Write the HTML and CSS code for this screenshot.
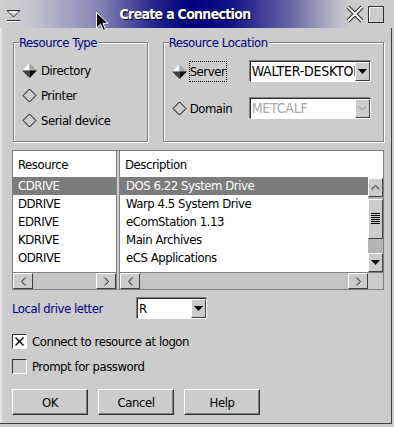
FILE: index.html
```html
<!DOCTYPE html>
<html lang="en">
<head>
    <meta charset="UTF-8">
    <title>Create a Connection</title>
    <link rel="stylesheet" href="styles.css">
</head>
<body>
    <div class="window">
        <div class="titlebar">
            <span class="sysmenu">
                <svg width="16" height="16" viewBox="0 0 16 16">
                    <path d="M1 3.5H14L7.5 10Z" fill="#cfcfcf" stroke="#303030"/>
                    <path d="M3 5H12" stroke="#fff"/>
                    <path d="M1 13.5H14.5" stroke="#303030"/>
                    <path d="M1 14.5H14.5" stroke="#fff"/>
                </svg>
            </span>
            <div class="title">Create a Connection</div>
            <span class="winbtns">
                <svg width="18" height="18" viewBox="0 0 18 18">
                    <path d="M2 2L16 16M16 2L2 16" stroke="#202020" stroke-width="4"/>
                    <path d="M2 2L16 16M16 2L2 16" stroke="#fff" stroke-width="2"/>
                </svg>
                <span class="maxbox"></span>
            </span>
        </div>

        <div class="content">
            <div class="groups">
                <fieldset class="group type-group">
                    <legend>Resource Type</legend>
                    <div class="radio">
                        <svg class="diamond" width="15" height="15" viewBox="0 0 15 15">
                            <path d="M7.5 0L0 7.5H7.5Z" fill="#f4f4f4"/>
                            <path d="M7.5 0L15 7.5H7.5Z" fill="#a8a8a8"/>
                            <path d="M0 7.5L7.5 15V7.5Z" fill="#404040"/>
                            <path d="M15 7.5L7.5 15V7.5Z" fill="#000"/>
                        </svg>
                        <span>Directory</span>
                    </div>
                    <div class="radio">
                        <svg class="diamond" width="15" height="15" viewBox="0 0 15 15">
                            <path d="M7.5 1L14 7.5L7.5 14L1 7.5Z" fill="none" stroke="#000"/>
                        </svg>
                        <span>Printer</span>
                    </div>
                    <div class="radio">
                        <svg class="diamond" width="15" height="15" viewBox="0 0 15 15">
                            <path d="M7.5 1L14 7.5L7.5 14L1 7.5Z" fill="none" stroke="#000"/>
                        </svg>
                        <span>Serial device</span>
                    </div>
                </fieldset>

                <fieldset class="group location-group">
                    <legend>Resource Location</legend>
                    <div class="loc-row">
                        <div class="radio">
                            <svg class="diamond" width="15" height="15" viewBox="0 0 15 15">
                                <path d="M7.5 0L0 7.5H7.5Z" fill="#f4f4f4"/>
                                <path d="M7.5 0L15 7.5H7.5Z" fill="#a8a8a8"/>
                                <path d="M0 7.5L7.5 15V7.5Z" fill="#404040"/>
                                <path d="M15 7.5L7.5 15V7.5Z" fill="#000"/>
                            </svg>
                            <span class="focus">Server</span>
                        </div>
                        <div class="combo loc-combo">
                            <span class="combo-text">WALTER-DESKTOP</span>
                            <span class="drop">
                                <svg width="9" height="5" viewBox="0 0 9 5"><path d="M0 0H9L4.5 5Z" fill="#000"/></svg>
                            </span>
                        </div>
                    </div>
                    <div class="loc-row">
                        <div class="radio">
                            <svg class="diamond" width="15" height="15" viewBox="0 0 15 15">
                                <path d="M7.5 1L14 7.5L7.5 14L1 7.5Z" fill="none" stroke="#000"/>
                            </svg>
                            <span>Domain</span>
                        </div>
                        <div class="combo loc-combo disabled">
                            <span class="combo-text">METCALF</span>
                            <span class="drop">
                                <svg width="9" height="5" viewBox="0 0 9 5"><path d="M1 0.5L4.5 4L8 0.5" fill="none" stroke="#888"/></svg>
                            </span>
                        </div>
                    </div>
                </fieldset>
            </div>

            <div class="lists">
                <div class="pane left-pane">
                    <div class="col-head">Resource</div>
                    <div class="pane-body">
                        <div class="rows">
                            <div class="row selected">CDRIVE</div>
                            <div class="row">DDRIVE</div>
                            <div class="row">EDRIVE</div>
                            <div class="row">KDRIVE</div>
                            <div class="row">ODRIVE</div>
                        </div>
                    </div>
                    <div class="hscroll">
                        <span class="sbtn"><svg width="7" height="9" viewBox="0 0 7 9"><path d="M5 0.5L1.5 4.5L5 8.5" fill="none" stroke="#303030"/><path d="M6.5 0.5L3 4.5L6.5 8.5" fill="none" stroke="#999"/></svg></span>
                        <span class="trough"></span>
                        <span class="sbtn"><svg width="7" height="9" viewBox="0 0 7 9"><path d="M2 0.5L5.5 4.5L2 8.5" fill="none" stroke="#303030"/><path d="M0.5 0.5L4 4.5L0.5 8.5" fill="none" stroke="#999"/></svg></span>
                    </div>
                </div>
                <div class="splitter"></div>
                <div class="pane right-pane">
                    <div class="col-head">Description</div>
                    <div class="pane-body">
                        <div class="rows">
                            <div class="row selected">DOS 6.22 System Drive</div>
                            <div class="row">Warp 4.5 System Drive</div>
                            <div class="row">eComStation 1.13</div>
                            <div class="row">Main Archives</div>
                            <div class="row">eCS Applications</div>
                        </div>
                        <div class="vscroll">
                            <span class="sbtn vbtn"><svg width="9" height="7" viewBox="0 0 9 7"><path d="M0.5 5L4.5 1.5L8.5 5" fill="none" stroke="#303030"/><path d="M0.5 6.5L4.5 3L8.5 6.5" fill="none" stroke="#999"/></svg></span>
                            <span class="thumb">
                                <svg width="9" height="12" viewBox="0 0 9 12">
                                    <path d="M0 0.5H9M0 2.5H9M0 4.5H9M0 6.5H9M0 8.5H9M0 10.5H9" stroke="#000"/>
                                </svg>
                            </span>
                            <span class="vtrough"></span>
                            <span class="sbtn vbtn"><svg width="9" height="5" viewBox="0 0 9 5"><path d="M0 0H9L4.5 5Z" fill="#000"/></svg></span>
                        </div>
                    </div>
                    <div class="hscroll">
                        <span class="sbtn"><svg width="7" height="9" viewBox="0 0 7 9"><path d="M5 0.5L1.5 4.5L5 8.5" fill="none" stroke="#303030"/><path d="M6.5 0.5L3 4.5L6.5 8.5" fill="none" stroke="#999"/></svg></span>
                        <span class="trough"></span>
                        <span class="sbtn"><svg width="7" height="9" viewBox="0 0 7 9"><path d="M2 0.5L5.5 4.5L2 8.5" fill="none" stroke="#303030"/><path d="M0.5 0.5L4 4.5L0.5 8.5" fill="none" stroke="#999"/></svg></span>
                        <span class="corner"></span>
                    </div>
                </div>
            </div>

            <div class="drive-row">
                <span class="blue-label">Local drive letter</span>
                <div class="combo drive-combo">
                    <span class="combo-text">R</span>
                    <span class="drop">
                        <svg width="9" height="5" viewBox="0 0 9 5"><path d="M0 0H9L4.5 5Z" fill="#000"/></svg>
                    </span>
                </div>
            </div>

            <div class="check">
                <span class="box checked">
                    <svg width="11" height="11" viewBox="0 0 11 11"><path d="M1.5 1.5L9.5 9.5M9.5 1.5L1.5 9.5" stroke="#000" stroke-width="1.4"/></svg>
                </span>
                <span>Connect to resource at logon</span>
            </div>
            <div class="check">
                <span class="box"></span>
                <span>Prompt for password</span>
            </div>

            <div class="buttons">
                <button>OK</button>
                <button>Cancel</button>
                <button>Help</button>
            </div>
        </div>

        <svg class="cursor" width="13" height="20" viewBox="0 0 13 20">
            <path d="M0.5 0.5V16L4.5 12.2L7.3 18.5L9.6 17.5L6.9 11.3H12Z" fill="#000" stroke="#fff"/>
        </svg>
    </div>
</body>
</html>
```

FILE: styles.css
```css
body {
    margin: 0;
    background: #cccccc;
    font-family: "DejaVu Sans Condensed", "DejaVu Sans", sans-serif;
    font-stretch: condensed;
    font-size: 13px;
    letter-spacing: -0.45px;
    color: #000;
}
.window {
    position: relative;
    width: 394px;
    height: 427px;
    box-sizing: border-box;
    background: #cccccc;
    display: flex;
    flex-direction: column;
    box-shadow: inset -2px -3px 0 #cccccc, inset -3px -4px 0 #404040, inset 2px 0 0 #e4e4e4;
    overflow: hidden;
}
.titlebar {
    height: 28px;
    display: flex;
    align-items: center;
    background: linear-gradient(90deg, #d0d0d0 0px, #c6c6d0 30px, #8484b4 100px, #24248c 155px, #00007c 190px, #101088 230px, #6666a4 290px, #b8b8c8 335px, #cccccc 350px);
}
.sysmenu {
    width: 28px;
    display: flex;
    justify-content: center;
    padding-top: 2px;
}
.title {
    flex: 1;
    text-align: center;
    color: #fff;
    font-weight: bold;
    font-size: 14px;
    letter-spacing: -0.7px;
    text-shadow: 1px 1px 0 #000;
    padding-right: 4px;
}
.winbtns {
    width: 48px;
    display: flex;
    align-items: center;
    gap: 4px;
}
.maxbox {
    width: 14px;
    height: 15px;
    border: 1px solid #303030;
    background: #cccccc;
    box-shadow: inset 1px 1px 0 #fff;
}

.content {
    flex: 1;
    display: flex;
    flex-direction: column;
    padding: 0 10px 0 12px;
}
.groups {
    display: flex;
    gap: 15px;
    margin-top: 7px;
    margin-left: 1px;
}
.group {
    margin: 0;
    height: 107px;
    box-sizing: border-box;
    border: 1px solid #808080;
    box-shadow: inset 1px 1px 0 #fff, 1px 1px 0 #fff;
    padding: 8px 0 0 8px;
    min-inline-size: 0;
}
.group legend {
    color: #000080;
    background: #cccccc;
    padding: 0 1px 0 0;
    margin-left: -3px;
    line-height: 15px;
}
.type-group {
    width: 135px;
}
.location-group {
    width: 222px;
    padding-top: 11px;
    display: flex;
    flex-direction: column;
    gap: 16px;
}
.radio {
    height: 25px;
    display: flex;
    align-items: center;
    gap: 4px;
}
.loc-row {
    height: 21px;
    display: flex;
    align-items: center;
}
.loc-row .radio {
    width: 78px;
    gap: 3px;
}
.focus {
    outline: 1px dotted #000;
    padding: 2px 1px 2px 0;
}
.combo {
    height: 21px;
    box-sizing: border-box;
    display: flex;
    background: #fff;
    border: 1px solid;
    border-color: #303030 #fff #fff #303030;
    box-shadow: -1px -1px 0 #808080;
}
.loc-combo {
    width: 121px;
}
.loc-combo .combo-text {
    font-size: 14px;
    letter-spacing: -0.2px;
}
.combo-text {
    flex: 1;
    overflow: hidden;
    white-space: nowrap;
    padding-left: 1px;
    line-height: 19px;
}
.disabled .combo-text {
    color: #a8a8a8;
}
.drop {
    width: 15px;
    box-sizing: border-box;
    background: #cccccc;
    border: 1px solid;
    border-color: #fff #404040 #404040 #fff;
    display: flex;
    align-items: center;
    justify-content: center;
}

.lists {
    margin-top: 8px;
    height: 140px;
    box-sizing: border-box;
    border: 1px solid #808080;
    display: flex;
}
.pane {
    display: flex;
    flex-direction: column;
    background: #fff;
}
.left-pane {
    width: 103px;
}
.right-pane {
    flex: 1;
}
.splitter {
    width: 2px;
    background: #cccccc;
    border-left: 1px solid #808080;
    border-right: 1px solid #808080;
}
.col-head {
    height: 26px;
    line-height: 27px;
    padding-left: 5px;
}
.pane-body {
    flex: 1;
    display: flex;
    overflow: hidden;
}
.rows {
    flex: 1;
}
.row {
    height: 18px;
    line-height: 18px;
    padding-left: 5px;
    white-space: nowrap;
}
.right-pane .row {
    padding-left: 6px;
}
.row.selected {
    background: #7c7c7c;
    color: #fff;
}
.hscroll {
    height: 16px;
    display: flex;
    background: #cccccc;
    border-top: 1px solid #808080;
}
.sbtn {
    width: 20px;
    box-sizing: border-box;
    background: #cccccc;
    border: 1px solid;
    border-color: #fff #404040 #404040 #fff;
    display: flex;
    align-items: center;
    justify-content: center;
}
.trough {
    flex: 1;
    background: #c4c4c4;
}
.corner {
    width: 15px;
    background: #cccccc;
}
.vscroll {
    width: 15px;
    display: flex;
    flex-direction: column;
    background: #b4b4b4;
    margin-top: 1px;
}
.vbtn {
    width: 15px;
    height: 19px;
}
.thumb {
    height: 40px;
    margin-top: 2px;
    box-sizing: border-box;
    background: #cccccc;
    border: 1px solid;
    border-color: #fff #404040 #404040 #fff;
    display: flex;
    align-items: center;
    justify-content: center;
}
.vtrough {
    flex: 1;
}

.drive-row {
    margin-top: 8px;
    height: 21px;
    display: flex;
    align-items: center;
}
.blue-label {
    color: #000080;
    width: 125px;
}
.drive-combo {
    width: 70px;
}

.check {
    height: 25px;
    display: flex;
    align-items: center;
    gap: 5px;
}
.drive-row + .check {
    margin-top: 10px;
}
.box {
    width: 15px;
    height: 15px;
    box-sizing: border-box;
    border: 1px solid;
    border-color: #303030 #fff #fff #303030;
    display: flex;
    align-items: center;
    justify-content: center;
}
.box.checked {
    background: #fff;
}

.buttons {
    margin-top: 10px;
    display: flex;
    gap: 10px;
}
button {
    width: 76px;
    height: 26px;
    font: inherit;
    letter-spacing: inherit;
    background: #cccccc;
    border: 1px solid;
    border-color: #fff #303030 #303030 #fff;
    box-shadow: inset -1px -1px 0 #808080;
    padding: 0;
}

.cursor {
    position: absolute;
    left: 96px;
    top: 12px;
}
```
